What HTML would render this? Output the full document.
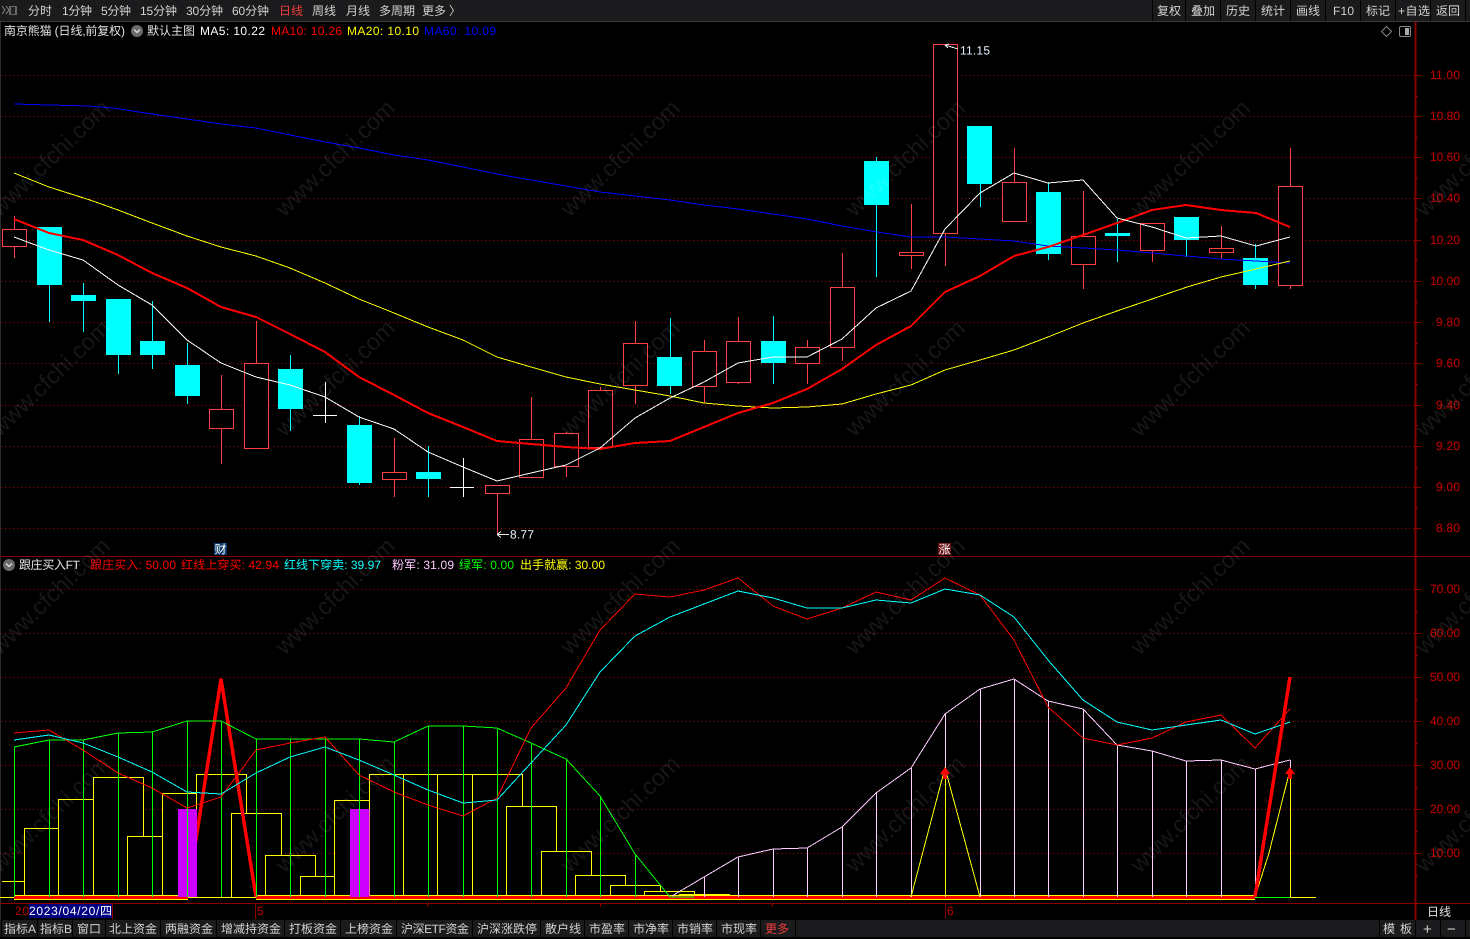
<!DOCTYPE html>
<html><head><meta charset="utf-8"><title>南京熊猫</title>
<style>
html,body{margin:0;padding:0;background:#000;width:1470px;height:939px;overflow:hidden}
svg{display:block;position:absolute;left:0;top:0}
text{font-family:"Liberation Sans","Noto Sans CJK SC",sans-serif;font-size:12px;text-rendering:geometricPrecision}
.s{shape-rendering:crispEdges}
.n{fill:#d2d2d2}
.ax{fill:#b00000;font-size:13px;stroke:#b00000;stroke-width:.2px}
.w text{font-size:23.5px}
</style></head><body>
<svg width="1470" height="939" viewBox="0 0 1470 939">
<rect width="1470" height="939" fill="#000"/>
<g class="s">
<!-- top bar -->
<rect x="0" y="0" width="1470" height="21" fill="#1b1b1d"/>
<rect x="0" y="21" width="1470" height="1" fill="#3a3a3a"/>
<rect x="0" y="22" width="1" height="898" fill="#2c2c2c"/>
<path d="M1152.5 0V21M1185.5 0V21M1220.5 0V21M1255.5 0V21M1290.5 0V21M1325.5 0V21M1360.5 0V21M1395.5 0V21M1430.5 0V21M1465.5 0V21" stroke="#000"/>
<!-- grid -->
<path d="M1 75.5H1415M1 116.5H1415M1 157.5H1415M1 198.5H1415M1 240.5H1415M1 281.5H1415M1 322.5H1415M1 363.5H1415M1 405.5H1415M1 446.5H1415M1 487.5H1415M1 528.5H1415M1 589.5H1415M1 633.5H1415M1 677.5H1415M1 721.5H1415M1 765.5H1415M1 809.5H1415M1 853.5H1415" stroke="#a80000" stroke-dasharray="1 3" fill="none"/>
<!-- axes -->
<path d="M1415.5 22V920" stroke="#8a0000" stroke-width="2"/>
<path d="M0 556.5H1470M0 903.5H1470" stroke="#8a0000"/>
<path d="M1415 75.5h6M1415 116.5h6M1415 157.5h6M1415 198.5h6M1415 240.5h6M1415 281.5h6M1415 322.5h6M1415 363.5h6M1415 405.5h6M1415 446.5h6M1415 487.5h6M1415 528.5h6M1415 96.5h3M1415 137.5h3M1415 178.5h3M1415 219.5h3M1415 260.5h3M1415 302.5h3M1415 343.5h3M1415 384.5h3M1415 425.5h3M1415 467.5h3M1415 508.5h3M1415 589.5h6M1415 633.5h6M1415 677.5h6M1415 721.5h6M1415 765.5h6M1415 809.5h6M1415 853.5h6M1415 611.5h3M1415 655.5h3M1415 699.5h3M1415 743.5h3M1415 787.5h3M1415 831.5h3M1415 875.5h3" stroke="#8a0000"/>
<path d="M427.5 904v3M600.5 904v3M772.5 904v3M112.5 904v15M255.5 904v15M945.5 904v15" stroke="#8a0000"/>

<!-- candle wicks -->
<path d="M14.5 216V229M14.5 246V258M256.5 321V363M394.5 438V472M394.5 479V497M221.5 375V409M221.5 428V464M497.5 493V534M531.5 397V439M566.5 432V433M566.5 466V477M600.5 387V390M635.5 321V343M635.5 385V404M704.5 340V351M704.5 386V403M738.5 317V341M738.5 382V384M807.5 340V347M807.5 363V384M842.5 253V287M842.5 347V361M911.5 204V252M911.5 255V269M945.5 233V266M1014.5 148V182M1083.5 191V236M1083.5 264V289M1152.5 250V262M1221.5 226V248M1221.5 252V259M1290.5 148V186M1290.5 285V289" stroke="#ff4040" fill="none"/>
<path d="M49.5 285V322M83.5 283V332M118.5 355V374M152.5 301V369M187.5 343V404M290.5 355V431M359.5 416V485M428.5 446V497M670.5 318V394M773.5 316V384M876.5 157V277M980.5 184V207M1048.5 182V260M1117.5 219V262M1186.5 240V257M1255.5 244V289" stroke="#00ffff" fill="none"/>
<!-- hollow red -->
<g fill="#000" stroke="#ff4040">
<rect x="2.5" y="229.5" width="24" height="17"/><rect x="209.5" y="409.5" width="24" height="19"/><rect x="244.5" y="363.5" width="24" height="85"/><rect x="382.5" y="472.5" width="24" height="7"/><rect x="485.5" y="485.5" width="24" height="8"/><rect x="519.5" y="439.5" width="24" height="38"/><rect x="554.5" y="433.5" width="24" height="33"/><rect x="588.5" y="390.5" width="24" height="57"/><rect x="623.5" y="343.5" width="24" height="42"/><rect x="692.5" y="351.5" width="24" height="35"/><rect x="726.5" y="341.5" width="24" height="41"/><rect x="795.5" y="347.5" width="24" height="16"/><rect x="830.5" y="287.5" width="24" height="60"/><rect x="899.5" y="252.5" width="24" height="3"/><rect x="933.5" y="44.5" width="24" height="189"/><rect x="1002.5" y="182.5" width="24" height="39"/><rect x="1071.5" y="236.5" width="24" height="28"/><rect x="1140.5" y="223.5" width="24" height="27"/><rect x="1209.5" y="248.5" width="24" height="4"/><rect x="1278.5" y="186.5" width="24" height="99"/>
</g>
<!-- cyan bodies -->
<g fill="#00ffff">
<rect x="37" y="227" width="25" height="58"/><rect x="71" y="295" width="25" height="6"/><rect x="106" y="299" width="25" height="56"/><rect x="140" y="341" width="25" height="14"/><rect x="175" y="365" width="25" height="31"/><rect x="278" y="369" width="25" height="40"/><rect x="347" y="425" width="25" height="58"/><rect x="416" y="472" width="25" height="7"/><rect x="657" y="357" width="25" height="29"/><rect x="761" y="341" width="25" height="22"/><rect x="864" y="161" width="25" height="44"/><rect x="967" y="126" width="25" height="58"/><rect x="1036" y="192" width="25" height="62"/><rect x="1105" y="233" width="25" height="3"/><rect x="1174" y="217" width="25" height="23"/><rect x="1243" y="258" width="25" height="27"/>
</g>
<!-- crosses -->
<path d="M325.5 382V423M313 415.5H337M463.5 458V497M450 487.5H474" stroke="#fff" fill="none"/>
<!-- MAs -->
<polyline fill="none" stroke="#0000ff" points="14,104 49,105 88,106 113,108 152,114 187,119 221,124 256,128 290,135 325,142 359,148 394,155 428,160 463,167 497,174 531,180 566,186 600,192 635,196 670,200 704,205 738,209 773,214 807,219 842,226 877,232 911,237 945,237 980,239 1014,241 1048,246 1083,248 1117,250 1152,253 1186,256 1221,259 1256,261 1290,263"/>
<polyline fill="none" stroke="#ffff00" points="14,173 49,187 90,200 118,210 152,223 187,236 221,247 256,256 290,268 325,283 359,299 394,313 428,327 463,340 497,357 531,367 566,377 600,384 635,390 670,396 704,403 738,406 773,408 807,407 842,404 876,394 911,385 945,370 980,360 1014,350 1048,337 1083,323 1117,311 1152,299 1187,287 1221,277 1256,269 1290,261"/>
<polyline fill="none" stroke="#ff0000" stroke-width="2" points="14,219 49,233 83,240 118,255 152,273 187,288 221,307 256,317 290,334 325,352 359,377 394,395 428,413 463,427 497,441 531,444 566,447 600,449 635,443 670,441 704,427 738,413 773,403 807,389 842,369 876,345 911,326 945,292 980,276 1014,256 1048,247 1083,235 1117,223 1152,210 1186,205 1221,210 1256,213 1290,227"/>
<polyline fill="none" stroke="#ffffff" points="14,237 49,250 83,260 118,285 152,305 187,340 221,363 256,377 290,385 325,397 359,417 394,429 428,452 463,467 497,481 531,473 566,465 600,448 635,418 670,398 704,382 738,363 773,357 807,357 842,339 876,308 911,291 945,229 980,193 1014,173 1048,183 1083,180 1117,218 1152,227 1186,238 1221,236 1256,246 1290,237"/>

<!-- lower panel: yellow bars -->
<path d="M2 881.5H24.5M0 897.5H1316" stroke="#ffff00" fill="none"/>
<g fill="#000" stroke="#ffff00">
<rect x="24.5" y="828.5" width="34" height="69"/>
<rect x="58.5" y="799.5" width="35" height="98"/>
<rect x="93.5" y="777.5" width="50" height="120"/>
<rect x="127.5" y="836.5" width="35" height="61"/>
<rect x="162.5" y="793.5" width="34" height="104"/>
<rect x="196.5" y="774.5" width="50" height="123"/>
<rect x="231.5" y="813.5" width="50" height="84"/>
<rect x="265.5" y="855.5" width="50" height="42"/>
<rect x="300.5" y="876.5" width="34" height="21"/>
<rect x="334.5" y="800.5" width="35" height="97"/>
<rect x="369.5" y="774.5" width="153" height="123"/>
<rect x="506.5" y="806.5" width="50" height="91"/>
<rect x="541.5" y="851.5" width="50" height="46"/>
<rect x="575.5" y="875.5" width="50" height="22"/>
<rect x="610.5" y="885.5" width="50" height="12"/>
<rect x="644.5" y="891.5" width="50" height="6"/>
<rect x="679.5" y="894.5" width="50" height="3"/>
<rect x="713.5" y="895.5" width="51" height="2"/>
</g>
<path d="M403.5 774V897M437.5 774V897M472.5 774V897" stroke="#ffff00" fill="none"/>
<!-- base -->
<rect x="14" y="895" width="174" height="5" fill="#ffff00"/>
<rect x="256" y="895" width="999" height="5" fill="#ffff00"/>
<rect x="14" y="896" width="174" height="3" fill="#ff0000"/>
<rect x="256" y="896" width="999" height="3" fill="#ff0000"/>
<path d="M1255 897.5H1290" stroke="#00ff00"/>
<!-- pink -->
<path d="M704.5 877V897M738.5 857V897M773.5 849V897M807.5 848V897M842.5 827V897M876.5 793V897M911.5 768V897M945.5 714V897M980.5 689V897M1014.5 679V897M1048.5 701V897M1083.5 709V897M1117.5 745V897M1152.5 751V897M1186.5 761V897M1221.5 760V897M1255.5 769V897M1290.5 760V897" stroke="#ffd0ff" fill="none"/>
<polyline fill="none" stroke="#ffd0ff" points="672,896 704,877 738,857 773,849 807,848 842,827 876,793 911,768 945,714 980,689 1014,679 1048,701 1083,709 1117,745 1152,751 1186,761 1221,760 1255,769 1290,760"/>
<!-- spike red -->
<polyline fill="none" stroke="#ff0000" stroke-width="3.5" stroke-linejoin="miter" points="187,897 221,679 256,897"/>
<!-- magenta -->
<rect x="178" y="809" width="19" height="88" fill="#cc00ff"/>
<rect x="350" y="809" width="19.500" height="88" fill="#cc00ff"/>
<!-- green -->
<path d="M14.500 747V897M49.500 740V897M83.500 740V897M118.500 733V897M152.500 732V897M187.500 721V897M221.500 721V897M256.500 739V897M290.500 739V897M325.500 739V897M359.500 739V897M394.500 742V897M428.500 726V897M463.500 726V897M497.500 728V897M531.500 743V897M566.500 759V897M600.500 796V897M635.500 854V897" stroke="#00ff00" fill="none"/>
<polyline fill="none" stroke="#00ff00" points="14,747 49,740 83,740 118,733 152,732 187,721 221,721 256,739 290,739 325,739 359,739 394,742 428,726 463,726 497,728 531,743 566,759 600,796 635,854 670,897 694,897"/>
<!-- thin red -->
<polyline fill="none" stroke="#ff0000" points="14,733 49,730 83,750 118,773 152,788 187,808 221,797 256,750 290,743 325,737 359,775 394,792 428,805 463,816 497,798 531,728 566,688 600,630 635,594 670,597 704,590 738,578 773,606 807,619 842,608 876,592 911,600 945,578 980,595 1014,640 1048,707 1083,738 1117,745 1152,738 1186,722 1221,715 1255,748 1290,709"/>
<!-- cyan -->
<polyline fill="none" stroke="#00ffff" points="14,740 49,735 83,743 118,757 152,772 187,792 221,794 256,773 290,757 325,747 359,760 394,775 428,790 463,803 497,800 531,763 566,725 600,672 635,636 670,617 704,604 738,591 773,598 807,608 842,608 876,600 911,603 945,589 980,595 1014,617 1048,660 1083,700 1117,722 1152,730 1186,725 1221,720 1255,734 1290,722"/>
<!-- yellow triangles -->
<path d="M945.500 768V897M1290.500 770V897" stroke="#ffff00" fill="none"/>
<polyline fill="none" stroke="#ffff00" points="911,897 945,768 980,897"/>
<polyline fill="none" stroke="#ffff00" points="1255,897 1269,853 1290,770"/>
<!-- spike 2 -->
<polyline fill="none" stroke="#ff0000" stroke-width="3.500" points="1255,897 1290,677"/>
<!-- arrows -->
<path d="M945 767l5 7h-3v5h-4v-5h-3zM1290 767l5 7h-3v5h-4v-5h-3z" fill="#ff0000"/>

<!-- markers -->
<rect x="214" y="543" width="13" height="12" fill="#0a3a6a"/>
<rect x="938" y="543" width="13" height="12" fill="#6a1010"/>
<!-- price arrows -->
<path d="M945 45L958 49M945 45l4-1M945 45l3 3M497 534.500H509M497 534.500l4-3M497 534.500l4 3" stroke="#e8e8e8" fill="none"/>
<!-- date bg -->
<rect x="29" y="904" width="83" height="14" fill="#000080"/>
<!-- bottom bar -->
<rect x="0" y="920" width="1470" height="17" fill="#1b1b1d"/>
<path d="M1.500 920v17M37.500 920v17M72.500 920v17M105.500 920v17M160.500 920v17M216.500 920v17M284.500 920v17M340.500 920v17M396.500 920v17M472.500 920v17M540.500 920v17M584.500 920v17M628.500 920v17M672.500 920v17M716.500 920v17M760.500 920v17M795.500 920v17M1379.500 920v17M1415.500 920v17M1440.500 920v17M1465.500 920v17" stroke="#000" fill="none"/>
<rect x="0" y="937" width="1470" height="2" fill="#000"/>
</g>

<!-- icons -->
<path d="M2 6l3 4-3 4M6 6l3 4-3 4" stroke="#888" fill="none"/>
<rect x="9" y="6" width="8" height="9" fill="#666"/><rect x="11" y="7" width="4" height="7" fill="#222"/>
<circle cx="137" cy="31" r="6" fill="#6a6a6a"/><path d="M134 29.500l3 3 3-3" stroke="#e0e0e0" stroke-width="1.300" fill="none"/>
<circle cx="9" cy="565" r="6" fill="#6a6a6a"/><path d="M6 563.500l3 3 3-3" stroke="#e0e0e0" stroke-width="1.300" fill="none"/>
<path d="M1386.500 26.500l5 5-5 5-5-5z" stroke="#888" fill="none"/>
<rect x="1399.500" y="26.500" width="11" height="10" rx="1.500" stroke="#888" fill="none"/><rect x="1405" y="28" width="4" height="7" fill="#aaa"/>

<!-- top nav text -->
<g class="n">
<text x="28" y="15">分时</text>
<text x="62" y="15" textLength="30">1分钟</text>
<text x="101" y="15" textLength="30">5分钟</text>
<text x="140" y="15" textLength="37">15分钟</text>
<text x="186" y="15" textLength="37">30分钟</text>
<text x="232" y="15" textLength="37">60分钟</text>
<text x="279" y="15" style="fill:#f03c3c">日线</text>
<text x="312" y="15">周线</text>
<text x="346" y="15">月线</text>
<text x="379" y="15">多周期</text>
<text x="422" y="15">更多</text>
<text x="449" y="15">〉</text>
<text x="1157" y="15">复权</text>
<text x="1191" y="15">叠加</text>
<text x="1226" y="15">历史</text>
<text x="1261" y="15">统计</text>
<text x="1296" y="15">画线</text>
<text x="1333" y="15" textLength="21">F10</text>
<text x="1366" y="15">标记</text>
<text x="1398" y="15" textLength="32">+自选</text>
<text x="1436" y="15">返回</text>
</g>
<!-- info row -->
<text x="4" y="35" fill="#e0e0e0" textLength="121">南京熊猫 (日线,前复权)</text>
<text x="147" y="35" fill="#e0e0e0">默认主图</text>
<text x="200" y="35" fill="#ffffff" textLength="65">MA5: 10.22</text>
<text x="271" y="35" fill="#ff0000" textLength="71">MA10: 10.26</text>
<text x="347" y="35" fill="#ffff00" textLength="72">MA20: 10.10</text>
<text x="424" y="35" fill="#0000ff" textLength="72">MA60: 10.09</text>
<!-- axis labels -->
<g class="ax">
<text x="1430" y="79" textLength="30">11.00</text>
<text x="1430" y="120" textLength="30">10.80</text>
<text x="1430" y="161" textLength="30">10.60</text>
<text x="1430" y="202" textLength="30">10.40</text>
<text x="1430" y="244" textLength="30">10.20</text>
<text x="1430" y="285" textLength="30">10.00</text>
<text x="1436" y="326" textLength="24">9.80</text>
<text x="1436" y="367" textLength="24">9.60</text>
<text x="1436" y="409" textLength="24">9.40</text>
<text x="1436" y="450" textLength="24">9.20</text>
<text x="1436" y="491" textLength="24">9.00</text>
<text x="1436" y="532" textLength="24">8.80</text>
<text x="1430" y="593" textLength="30">70.00</text>
<text x="1430" y="637" textLength="30">60.00</text>
<text x="1430" y="681" textLength="30">50.00</text>
<text x="1430" y="725" textLength="30">40.00</text>
<text x="1430" y="769" textLength="30">30.00</text>
<text x="1430" y="813" textLength="30">20.00</text>
<text x="1430" y="857" textLength="30">10.00</text>
</g>
<!-- extremes -->
<text x="960" y="54.500" fill="#e8f0ff" textLength="30">11.15</text>
<text x="510" y="538.500" fill="#e8f0ff" textLength="24">8.77</text>
<text x="214.500" y="553.500" fill="#fff">财</text>
<text x="938.500" y="553.500" fill="#fff">涨</text>
<!-- legend row -->
<text x="19" y="569" fill="#e8e8e8" textLength="61">跟庄买入FT</text>
<text x="90" y="569" fill="#ff0000" textLength="86">跟庄买入: 50.00</text>
<text x="181" y="569" fill="#ff0000" textLength="98">红线上穿买: 42.94</text>
<text x="284" y="569" fill="#00ffff" textLength="97">红线下穿卖: 39.97</text>
<text x="392" y="569" fill="#ffc8ff" textLength="62">粉军: 31.09</text>
<text x="459" y="569" fill="#00ff00" textLength="55">绿军: 0.00</text>
<text x="520" y="569" fill="#ffff00" textLength="85">出手就赢: 30.00</text>
<!-- date row -->
<text x="15" y="915" fill="#c00000" textLength="14">20</text>
<text x="29" y="915" fill="#ffffff" textLength="83">2023/04/20/四</text>
<text x="257" y="915" fill="#c00000">5</text>
<text x="947" y="915" fill="#c00000">6</text>
<text x="1427" y="916" fill="#e0e0e0">日线</text>
<!-- bottom text -->
<g class="n">
<text x="4" y="933" textLength="32">指标A</text>
<text x="40" y="933" textLength="32">指标B</text>
<text x="77" y="933">窗口</text>
<text x="109" y="933">北上资金</text>
<text x="165" y="933">两融资金</text>
<text x="221" y="933">增减持资金</text>
<text x="289" y="933">打板资金</text>
<text x="345" y="933">上榜资金</text>
<text x="401" y="933" textLength="68">沪深ETF资金</text>
<text x="477" y="933">沪深涨跌停</text>
<text x="545" y="933">散户线</text>
<text x="589" y="933">市盈率</text>
<text x="633" y="933">市净率</text>
<text x="677" y="933">市销率</text>
<text x="721" y="933">市现率</text>
<text x="765" y="933" style="fill:#f03c3c">更多</text>
<text x="1383" y="933" textLength="29">模 板</text>
<text x="1423" y="934" style="font-size:15px">+</text>
<text x="1447" y="934" style="font-size:15px">−</text>
</g>
<!-- watermark -->
<g class="w" fill="#ffffff" fill-opacity="0.085" text-anchor="middle">
<text transform="translate(50 158) rotate(-44)" dy="8">www.cfchi.com</text>
<text transform="translate(335 158) rotate(-44)" dy="8">www.cfchi.com</text>
<text transform="translate(620 158) rotate(-44)" dy="8">www.cfchi.com</text>
<text transform="translate(905 158) rotate(-44)" dy="8">www.cfchi.com</text>
<text transform="translate(1190 158) rotate(-44)" dy="8">www.cfchi.com</text>
<text transform="translate(1475 158) rotate(-44)" dy="8">www.cfchi.com</text>
<text transform="translate(50 378) rotate(-44)" dy="8">www.cfchi.com</text>
<text transform="translate(335 378) rotate(-44)" dy="8">www.cfchi.com</text>
<text transform="translate(620 378) rotate(-44)" dy="8">www.cfchi.com</text>
<text transform="translate(905 378) rotate(-44)" dy="8">www.cfchi.com</text>
<text transform="translate(1190 378) rotate(-44)" dy="8">www.cfchi.com</text>
<text transform="translate(1475 378) rotate(-44)" dy="8">www.cfchi.com</text>
<text transform="translate(50 596) rotate(-44)" dy="8">www.cfchi.com</text>
<text transform="translate(335 596) rotate(-44)" dy="8">www.cfchi.com</text>
<text transform="translate(620 596) rotate(-44)" dy="8">www.cfchi.com</text>
<text transform="translate(905 596) rotate(-44)" dy="8">www.cfchi.com</text>
<text transform="translate(1190 596) rotate(-44)" dy="8">www.cfchi.com</text>
<text transform="translate(1475 596) rotate(-44)" dy="8">www.cfchi.com</text>
<text transform="translate(50 814) rotate(-44)" dy="8">www.cfchi.com</text>
<text transform="translate(335 814) rotate(-44)" dy="8">www.cfchi.com</text>
<text transform="translate(620 814) rotate(-44)" dy="8">www.cfchi.com</text>
<text transform="translate(905 814) rotate(-44)" dy="8">www.cfchi.com</text>
<text transform="translate(1190 814) rotate(-44)" dy="8">www.cfchi.com</text>
<text transform="translate(1475 814) rotate(-44)" dy="8">www.cfchi.com</text>
</g>
</svg>
</body></html>
